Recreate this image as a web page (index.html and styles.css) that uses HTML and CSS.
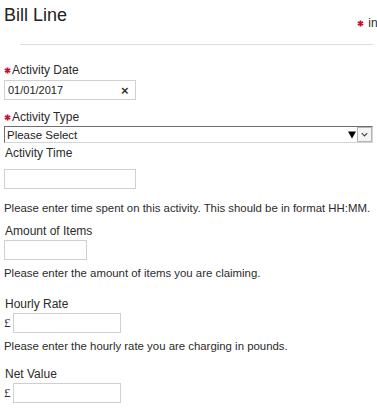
FILE: index.html
```html
<!DOCTYPE html>
<html lang="en">
<head>
    <meta charset="UTF-8">
    <meta name="viewport" content="width=device-width, initial-scale=1.0">
    <title>Bill Line</title>
    <link rel="stylesheet" href="styles.css">
</head>
<body>
    <header class="page-head">
        <h1>Bill Line</h1>
        <p class="required-note">
            <svg class="req" viewBox="0 0 8 8" aria-hidden="true"><path d="M4 0.5V7.5M1 2.2L7 5.8M7 2.2L1 5.8"/></svg>
            indicates a required field
        </p>
    </header>
    <div class="rule"></div>

    <form class="bill-form">
        <!-- activity date -->
        <div class="field field-date">
            <label for="activityDate">
                <svg class="req" viewBox="0 0 8 8" aria-hidden="true"><path d="M4 0.5V7.5M1 2.2L7 5.8M7 2.2L1 5.8"/></svg>Activity Date
            </label>
            <div class="date-box">
                <input type="text" id="activityDate" value="01/01/2017">
                <span class="clear">&times;</span>
            </div>
        </div>

        <!-- activity type -->
        <div class="field field-type">
            <label for="activityType">
                <svg class="req" viewBox="0 0 8 8" aria-hidden="true"><path d="M4 0.5V7.5M1 2.2L7 5.8M7 2.2L1 5.8"/></svg>Activity Type
            </label>
            <div class="select-box">
                <select id="activityType">
                    <option>Please Select</option>
                </select>
                <svg class="caret" viewBox="0 0 9 8" aria-hidden="true"><path d="M0 0H9L4.5 8Z"/></svg>
                <span class="select-btn">
                    <svg viewBox="0 0 10 10" aria-hidden="true"><path d="M2 3.5L5 6.5L8 3.5"/></svg>
                </span>
            </div>
        </div>

        <div class="field field-time">
            <label for="activityTime">Activity Time</label>
            <input type="text" id="activityTime" class="text-input wide">
        </div>
        <p class="help help-time">Please enter time spent on this activity. This should be in format HH:MM.</p>

        <div class="field field-amount">
            <label for="amount">Amount of Items</label>
            <input type="text" id="amount" class="text-input short">
        </div>
        <p class="help">Please enter the amount of items you are claiming.</p>

        <div class="field field-rate">
            <label for="hourlyRate">Hourly Rate</label>
            <div class="money">
                <span class="pound">&pound;</span>
                <input type="text" id="hourlyRate" class="text-input money-input">
            </div>
        </div>
        <p class="help">Please enter the hourly rate you are charging in pounds.</p>

        <div class="field field-net">
            <label for="netValue">Net Value</label>
            <div class="money">
                <span class="pound">&pound;</span>
                <input type="text" id="netValue" class="text-input money-input">
            </div>
        </div>
    </form>
</body>
</html>
```

FILE: styles.css
```css
body {
    margin: 0;
    padding: 0 4px;
    font-family: "Liberation Sans", Arial, sans-serif;
    font-size: 12px;
    color: #2b2b2b;
    background: #fff;
    overflow: hidden;
}

.page-head {
    display: flex;
}

.page-head h1 {
    flex: 0 0 353px;
    margin: 0;
    padding-top: 5px;
    font-size: 18px;
    line-height: 20px;
    font-weight: normal;
    color: #222;
}

.required-note {
    margin: 0;
    padding-top: 16px;
    line-height: 14px;
    white-space: nowrap;
}

.req {
    width: 7px;
    height: 7px;
    margin-right: 1px;
    stroke: #c8102e;
    stroke-width: 2;
    fill: none;
}

.rule {
    margin: 14px 0 0 16px;
    border-top: 1px solid #dcdcdc;
}

.bill-form {
    display: flex;
    flex-direction: column;
}

.field label {
    display: block;
    line-height: 14px;
    padding-left: 1px;
}

.field label .req {
    margin-left: -1px;
}

.field-date {
    margin-top: 18px;
}

.field-type {
    margin-top: 10px;
}

.field-time {
    margin-top: 3px;
}

.field-amount {
    margin-top: 9px;
}

.field-rate {
    margin-top: 17px;
}

.field-net {
    margin-top: 14px;
}

.date-box {
    display: flex;
    align-items: center;
    width: 132px;
    height: 20px;
    margin-top: 3px;
    box-sizing: border-box;
    border: 1px solid #d0d0d0;
}

.date-box input {
    flex: 1;
    min-width: 0;
    border: none;
    padding: 0 0 0 3px;
    font-family: inherit;
    font-size: 11px;
    color: #222;
    outline: none;
}

.clear {
    width: 14px;
    font-size: 13px;
    font-weight: bold;
    color: #333;
}

.select-box {
    display: flex;
    align-items: center;
    height: 17px;
    margin-top: 2px;
    box-sizing: border-box;
    border: 1px solid #d4d4d4;
    border-top-color: #6e6e6e;
    border-left-color: #6e6e6e;
}

.select-box select {
    flex: 1;
    appearance: none;
    -webkit-appearance: none;
    border: none;
    background: transparent;
    padding: 0 0 0 2px;
    font-family: inherit;
    font-size: 11.5px;
    color: #222;
    outline: none;
}

.caret {
    width: 8px;
    height: 8px;
    margin-right: 1px;
    fill: #000;
}

.select-btn {
    display: flex;
    align-items: center;
    justify-content: center;
    width: 13px;
    height: 13px;
    border: 1px solid #b5b5b5;
    background: #f4f4f4;
}

.select-btn svg {
    width: 9px;
    height: 9px;
    stroke: #444;
    stroke-width: 1.3;
    fill: none;
}

.text-input {
    display: block;
    height: 20px;
    box-sizing: border-box;
    margin-top: 2px;
    border: 1px solid #d0d0d0;
    padding: 0 3px;
    font-family: inherit;
    font-size: 11px;
}

.wide {
    width: 132px;
    margin-top: 9px;
}

.short {
    width: 83px;
}

.help {
    margin: 6px 0 0;
    font-size: 11.4px;
    line-height: 14px;
    white-space: nowrap;
}

.help-time {
    margin-top: 12px;
}

.money {
    display: flex;
    align-items: center;
    margin-top: 2px;
}

.pound {
    width: 9px;
    font-family: "Liberation Serif", serif;
    font-size: 13px;
}

.money-input {
    width: 108px;
    margin-top: 0;
}
```
